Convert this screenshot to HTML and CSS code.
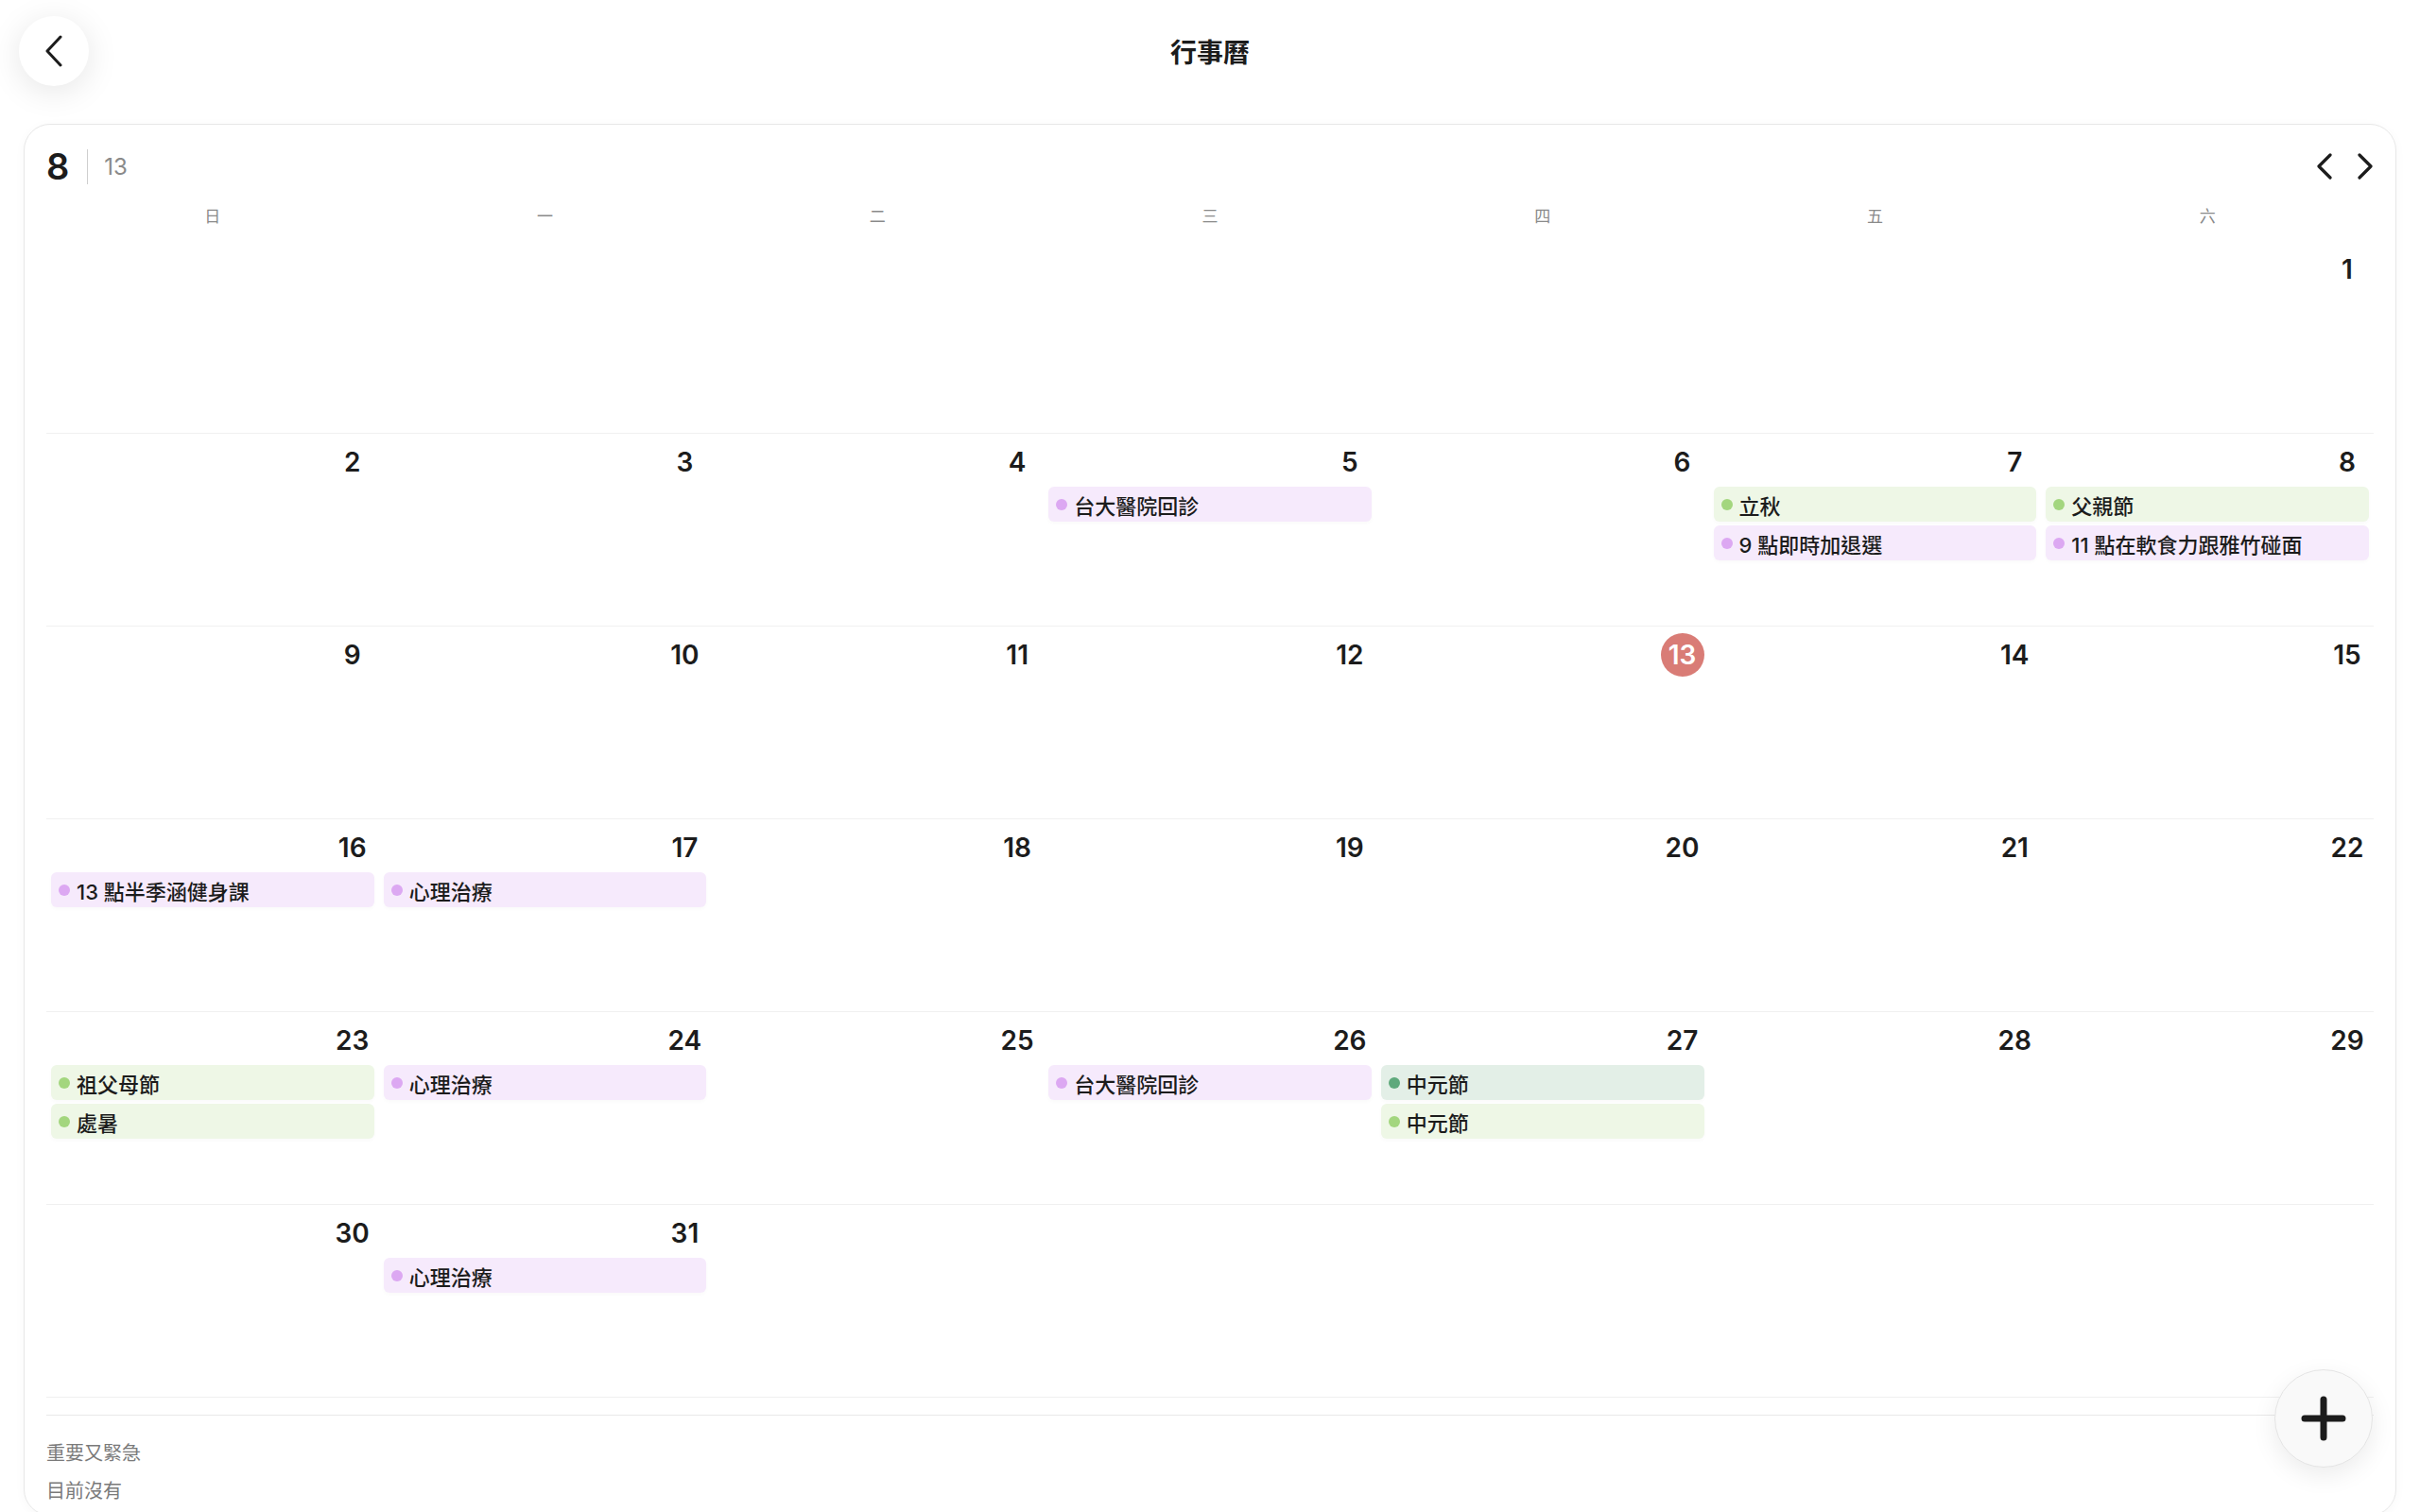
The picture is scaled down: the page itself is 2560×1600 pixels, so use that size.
FILE: index.html
```html
<!DOCTYPE html>
<html lang="zh-Hant">
<head>
    <meta charset="utf-8">
    <title>行事曆</title>
    <link rel="stylesheet" href="styles.css">
</head>
<body>
    <header class="topbar">
        <button class="back-btn" aria-label="返回">
            <svg width="20" height="34" viewBox="0 0 20 34"><polyline points="17,2 3,17 17,32" /></svg>
        </button>
        <h1 class="title">行事曆</h1>
        <span></span>
    </header>

    <main class="card">
        <div class="month-bar">
            <div class="month-info">
                <span class="month">8</span>
                <span class="divider"></span>
                <span class="today-num">13</span>
            </div>
            <div class="nav">
                <svg width="18" height="28" viewBox="0 0 18 28"><polyline points="15,2 3,14 15,26" /></svg>
                <svg width="18" height="28" viewBox="0 0 18 28"><polyline points="3,2 15,14 3,26" /></svg>
            </div>
        </div>

        <div class="weekdays">
            <span>日</span><span>一</span><span>二</span><span>三</span><span>四</span><span>五</span><span>六</span>
        </div>

        <div class="week">
            <div class="day"></div>
            <div class="day"></div>
            <div class="day"></div>
            <div class="day"></div>
            <div class="day"></div>
            <div class="day"></div>
            <div class="day"><span class="date">1</span></div>
        </div>

        <div class="week">
            <div class="day"><span class="date">2</span></div>
            <div class="day"><span class="date">3</span></div>
            <div class="day"><span class="date">4</span></div>
            <div class="day">
                <span class="date">5</span>
                <div class="events">
                    <div class="event purple"><i></i>台大醫院回診</div>
                </div>
            </div>
            <div class="day"><span class="date">6</span></div>
            <div class="day">
                <span class="date">7</span>
                <div class="events">
                    <div class="event green"><i></i>立秋</div>
                    <div class="event purple"><i></i>9 點即時加退選</div>
                </div>
            </div>
            <div class="day">
                <span class="date">8</span>
                <div class="events">
                    <div class="event green"><i></i>父親節</div>
                    <div class="event purple"><i></i>11 點在軟食力跟雅竹碰面</div>
                </div>
            </div>
        </div>

        <div class="week">
            <div class="day"><span class="date">9</span></div>
            <div class="day"><span class="date">10</span></div>
            <div class="day"><span class="date">11</span></div>
            <div class="day"><span class="date">12</span></div>
            <div class="day"><span class="date today">13</span></div>
            <div class="day"><span class="date">14</span></div>
            <div class="day"><span class="date">15</span></div>
        </div>

        <div class="week">
            <div class="day">
                <span class="date">16</span>
                <div class="events">
                    <div class="event purple"><i></i>13 點半季涵健身課</div>
                </div>
            </div>
            <div class="day">
                <span class="date">17</span>
                <div class="events">
                    <div class="event purple"><i></i>心理治療</div>
                </div>
            </div>
            <div class="day"><span class="date">18</span></div>
            <div class="day"><span class="date">19</span></div>
            <div class="day"><span class="date">20</span></div>
            <div class="day"><span class="date">21</span></div>
            <div class="day"><span class="date">22</span></div>
        </div>

        <div class="week">
            <div class="day">
                <span class="date">23</span>
                <div class="events">
                    <div class="event green"><i></i>祖父母節</div>
                    <div class="event green"><i></i>處暑</div>
                </div>
            </div>
            <div class="day">
                <span class="date">24</span>
                <div class="events">
                    <div class="event purple"><i></i>心理治療</div>
                </div>
            </div>
            <div class="day"><span class="date">25</span></div>
            <div class="day">
                <span class="date">26</span>
                <div class="events">
                    <div class="event purple"><i></i>台大醫院回診</div>
                </div>
            </div>
            <div class="day">
                <span class="date">27</span>
                <div class="events">
                    <div class="event teal"><i></i>中元節</div>
                    <div class="event green"><i></i>中元節</div>
                </div>
            </div>
            <div class="day"><span class="date">28</span></div>
            <div class="day"><span class="date">29</span></div>
        </div>

        <div class="week">
            <div class="day"><span class="date">30</span></div>
            <div class="day">
                <span class="date">31</span>
                <div class="events">
                    <div class="event purple"><i></i>心理治療</div>
                </div>
            </div>
            <div class="day"></div>
            <div class="day"></div>
            <div class="day"></div>
            <div class="day"></div>
            <div class="day"></div>
        </div>

        <div class="todo">
            <p>重要又緊急</p>
            <p>目前沒有</p>
        </div>
    </main>

    <button class="fab" aria-label="新增">
        <svg width="48" height="48" viewBox="0 0 48 48"><path d="M24 4 V44 M4 24 H44" /></svg>
    </button>
</body>
</html>
```

FILE: styles.css
```css
body {
    margin: 0;
    background: #fff;
    color: #1c1c1c;
    font-family: Inter, "Noto Sans CJK TC", sans-serif;
}
button {
    border: none;
    padding: 0;
    cursor: pointer;
}
svg polyline,
svg path {
    fill: none;
    stroke: #1c1c1c;
    stroke-linecap: round;
    stroke-linejoin: round;
}

/* top bar */
.topbar {
    display: grid;
    grid-template-columns: 1fr auto 1fr;
    align-items: center;
    height: 108px;
    padding: 0 20px;
    margin-bottom: 23px;
}
.back-btn {
    width: 74px;
    height: 74px;
    border-radius: 50%;
    background: #fff;
    box-shadow: 0 6px 34px rgba(0,0,0,0.1);
    display: flex;
    align-items: center;
    justify-content: center;
}
.back-btn svg polyline {
    stroke-width: 3;
}
.title {
    margin: 0;
    font-size: 28px;
    font-weight: 700;
    font-family: "Noto Sans CJK TC", sans-serif;
}

/* calendar card */
.card {
    margin: 0 25px;
    padding: 21px 23px 6px;
    border: 1px solid #e7e7e7;
    border-radius: 28px;
    box-shadow: 0 2px 12px rgba(0,0,0,0.03);
}
.month-bar {
    display: flex;
    align-items: center;
    justify-content: space-between;
    height: 46px;
}
.month-info {
    display: flex;
    align-items: center;
}
.month {
    font-size: 38px;
    font-weight: 600;
    margin-right: 19px;
}
.divider {
    width: 1px;
    height: 37px;
    background: #cfcfcf;
    margin-right: 17px;
}
.today-num {
    font-size: 24px;
    color: #8a8a8a;
}
.nav {
    display: flex;
    gap: 25px;
}
.nav svg polyline {
    stroke-width: 3.2;
}

.weekdays {
    display: grid;
    grid-template-columns: repeat(7, 1fr);
    height: 56px;
    align-items: center;
    text-align: center;
    font-family: "Noto Sans CJK TC", sans-serif;
    font-size: 17px;
    color: #8a8a8a;
}

.week {
    display: grid;
    grid-template-columns: repeat(7, 1fr);
    height: 204px;
    box-sizing: border-box;
    border-bottom: 1px solid #f0f0f0;
}
.day {
    display: flex;
    flex-direction: column;
    padding: 7px 5px 0;
    min-width: 0;
}
.date {
    align-self: flex-end;
    width: 46px;
    height: 46px;
    border-radius: 50%;
    display: flex;
    align-items: center;
    justify-content: center;
    font-size: 28px;
    font-weight: 600;
}
.date.today {
    background: #d97c76;
    color: #fff;
}
.events {
    margin-top: 3px;
    display: flex;
    flex-direction: column;
    gap: 4px;
}
.event {
    height: 37px;
    display: flex;
    align-items: center;
    gap: 7px;
    padding-left: 8px;
    border-radius: 6px;
    font-size: 22px;
    font-weight: 500;
    color: #1c1c1c;
    white-space: nowrap;
    box-shadow: 0 2px 4px rgba(0,0,0,0.025);
}
.event i {
    width: 12px;
    height: 12px;
    border-radius: 50%;
    flex-shrink: 0;
}
.event.purple { background: #f6eafc; }
.event.purple i { background: #dca8f2; }
.event.green { background: #eef7e6; }
.event.green i { background: #a3d67e; }
.event.teal { background: #e3efe7; }
.event.teal i { background: #5fa97c; }

/* bottom list */
.todo {
    margin-top: 18px;
    padding-top: 19px;
    border-top: 1px solid #e9e9e9;
    font-family: "Noto Sans CJK TC", sans-serif;
    font-size: 20px;
    color: #7a7a7a;
}
.todo p {
    margin: 0;
    line-height: 40px;
}

.fab {
    position: fixed;
    right: 50px;
    bottom: 47px;
    width: 104px;
    height: 104px;
    border-radius: 50%;
    background: #f9f9f9;
    border: 1px solid #e4e4e4;
    box-shadow: 0 8px 26px rgba(0,0,0,0.08);
    display: flex;
    align-items: center;
    justify-content: center;
}
.fab svg path {
    stroke-width: 7;
}
```
